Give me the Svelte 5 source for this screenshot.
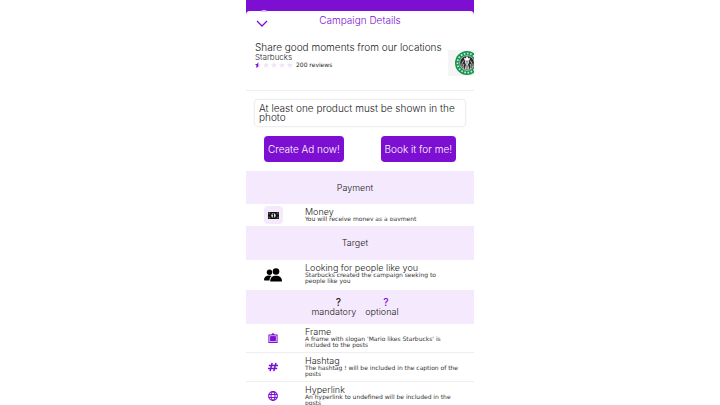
<script>
  const stars = [0, 1, 2, 3, 4];
  const starPath = 'M12 0l3.600 7.800 8.400.9-6.200 5.700 1.700 8.600L12 18.800l-7.500 4.200 1.700-8.600L0 8.700l8.400-.9z';
  const extras = [
    { icon: 'frame', name: 'Frame', text: "A frame with slogan 'Mario likes Starbucks' is included to the posts" },
    { icon: 'hash', name: 'Hashtag', text: 'The hashtag ! will be included in the caption of the posts' },
    { icon: 'globe', name: 'Hyperlink', text: 'An hyperlink to undefined will be included in the posts' }
  ];
</script>

<div class="phone">
  <main>
    <header>
      <button class="close" aria-label="Close">
        <svg viewBox="0 0 12 8"><path d="M1 1l5 5 5-5" fill="none" stroke="#7c0fd1" stroke-width="1.3" /></svg>
      </button>
      <h1>Campaign Details</h1>
    </header>

    <section class="summary">
      <div class="about">
        <h2>Share good moments from our locations</h2>
        <p class="brand">Starbucks</p>
        <div class="rating">
          {#each stars as i}
            <svg viewBox="0 0 24 24">
              <path d={starPath} fill="#f1e3fc" />
              {#if i === 0}<path d="M13 0v18.800l-8.500 4.200 1.700-8.600L0 8.700l8.400-.9z" fill="#7c0fd1" />{/if}
            </svg>
          {/each}
          <span>200 reviews</span>
        </div>
      </div>
      <div class="logo">
        <svg viewBox="0 0 24 24" role="img" aria-label="Starbucks">
          <circle cx="12" cy="12" r="12" fill="#14934d" />
          <circle cx="12" cy="12" r="9.600" fill="none" stroke="#c5e6d3" stroke-width="1.800" stroke-dasharray="1.700 1.500" />
          <circle cx="12" cy="12" r="7.300" fill="#2b2b2b" stroke="#fff" stroke-width=".6" />
          <path d="M9 6.500l1.500 1L12 5l1.500 2.500 1.500-1-.5 2.500h-5z" fill="#fff" />
          <path d="M9 9.500c-2 2-2.500 4-2 7M15 9.500c2 2 2.500 4 2 7M8.800 13c-.6 2-.6 3-.3 5M15.200 13c.6 2 .6 3 .3 5" fill="none" stroke="#ddd" stroke-width=".8" />
          <path d="M10 9h4v3l-1 1.500 1.500 5h-5l1.500-5-1-1.500z" fill="#ccc" />
          <path d="M11 10.500h.7M12.500 10.500h.7M11.500 12h1M12 14v4" stroke="#222" stroke-width=".6" />
        </svg>
      </div>
    </section>

    <p class="rule">At least one product must be shown in the photo</p>

    <div class="actions">
      <button class="primary">Create Ad now!</button>
      <button class="primary">Book it for me!</button>
    </div>

    <h3 class="band">Payment</h3>
    <div class="row short">
      <div class="icon">
        <span class="tile">
          <svg class="cash" viewBox="0 0 11 7">
            <rect width="11" height="7" rx=".5" fill="#111" />
            <path d="M1 2.500V1h1.500M8.500 1H10v1.500M1 4.500V6h1.500M8.500 6H10V4.500" fill="none" stroke="#999" stroke-width=".6" />
            <ellipse cx="5.500" cy="3.500" rx="2.200" ry="2.500" fill="#ddd" />
            <path d="M5.500 1.500v4M4.500 2.500l1-.7M4.500 5.300h2" stroke="#111" stroke-width="1" />
          </svg>
        </span>
      </div>
      <div class="copy">
        <h4>Money</h4>
        <p>You will receive money as a payment</p>
      </div>
    </div>

    <h3 class="band tall">Target</h3>
    <div class="row people">
      <div class="icon">
        <svg class="group" viewBox="0 0 18 14">
          <circle cx="5.500" cy="4.200" r="2.700" />
          <circle cx="12" cy="3.500" r="3.300" />
          <path d="M0 12c0-3 2-4.500 5-4.500 1 0 2 .2 2.700.6C6.200 9.200 5.600 10.500 5.500 12.500H.5z" />
          <path d="M6.200 13.500c0-4 2.300-5.700 5.800-5.700s6 1.700 6 5.700z" />
        </svg>
      </div>
      <div class="copy">
        <h4>Looking for people like you</h4>
        <p>Starbucks created the campaign seeking to people like you</p>
      </div>
    </div>

    <div class="band tall legend">
      <div><b>?</b><span>mandatory</span></div>
      <div><b class="optional">?</b><span>optional</span></div>
    </div>

    {#each extras as item}
      <div class="row extra">
        <div class="icon">
          <svg class="glyph" viewBox="0 0 24 24">
            {#if item.icon === 'frame'}
              <path fill="#7c0fd1" d="M23 3.500h-6.500L12 0 7.500 3.500H1V24h22zM20.500 21.500h-17V6h17zM5.500 8h13v11.500h-13z" fill-rule="evenodd" />
              <path fill="#7c0fd1" d="M5.500 8h13v11.500h-13z" />
            {:else if item.icon === 'hash'}
              <path fill="none" stroke="#7c0fd1" stroke-width="3.600" d="M10 2L5 22M19 2l-5 20M2 8.500h22M0 15.500h22" />
            {:else}
              <g fill="none" stroke="#7c0fd1" stroke-width="2.600">
                <circle cx="12" cy="12" r="10.500" />
                <ellipse cx="12" cy="12" rx="4.700" ry="10.500" />
                <path d="M2 8.500h20M2 15.500h20" />
              </g>
            {/if}
          </svg>
        </div>
        <div class="copy">
          <h4>{item.name}</h4>
          <p>{item.text}</p>
        </div>
      </div>
    {/each}
  </main>
</div>

<style>
  :global(body) { background: #fff; overflow: hidden; }
  .phone {
    box-sizing: border-box;
    width: min(100%, 228px);
    height: 100vh;
    margin: 0 auto;
    padding-top: 11px;
    overflow: hidden;
    background: #7c0fd1;
    color: #222;
    font-family: Inter, "Liberation Sans", sans-serif;
    font-weight: 300;
  }
  main { position: relative; min-height: 100%; background: #fff; border-radius: 4px 4px 0 0; }
  /* soft highlight of the close handle above the sheet's edge */
  main::before {
    content: "";
    position: absolute;
    top: -1px;
    left: 15px;
    width: 6px;
    height: 2px;
    border-radius: 3px 3px 0 0;
    background: #dcbcf3;
  }
  h1, h2, h3, h4, p { margin: 0; font-weight: 300; }
  svg { display: block; }
  button { border: 0; padding: 0; font: inherit; cursor: pointer; }
  header {
    display: grid;
    grid-template-columns: 32px 1fr 32px;
    align-items: center;
    height: 18px;
  }
  .close { justify-self: center; margin-top: 8px; background: none; }
  .close svg { width: 12px; height: 8px; }
  h1 { font-size: 10px; line-height: 12px; text-align: center; color: #7c0fd1; }
  .summary {
    display: flex;
    justify-content: space-between;
    box-sizing: border-box;
    height: 62px;
    padding: 13px 0 0 9px;
    border-bottom: 1px solid #eee;
    overflow: hidden;
  }
  .about { white-space: nowrap; }
  h2 { font-size: 10px; line-height: 11px; }
  .brand { font-size: 8px; line-height: 8px; }
  .rating {
    display: flex;
    align-items: center;
    gap: 2px;
    height: 7px;
    font-family: "DejaVu Sans", sans-serif;
    font-size: 6px;
    line-height: 7px;
    font-weight: 400;
  }
  .rating svg { width: 6px; height: 6px; }
  .rating span { margin-left: 1px; }
  .logo {
    flex: 0 0 26px;
    display: flex;
    box-sizing: border-box;
    height: 26px;
    margin-top: 8px;
    padding: 1px 0 0 7px;
    overflow: hidden;
    background: #f5f5f5;
  }
  .logo svg { flex: none; width: 24px; height: 24px; }
  .rule {
    margin: 8px 8px 0;
    padding: 4px;
    border: 1px solid #eee;
    border-radius: 4px;
    box-shadow: 0 0 2px #eee;
    font-size: 10px;
    line-height: 9px;
  }
  .actions { display: flex; justify-content: space-between; padding: 9px 18px; }
  .primary {
    height: 26px;
    padding: 0 4px;
    border-radius: 4px;
    background: #7c0fd1;
    color: #fff;
    font-size: 10px;
    line-height: 12px;
    white-space: nowrap;
  }
  .band {
    display: flex;
    align-items: center;
    justify-content: center;
    box-sizing: border-box;
    height: 33px;
    padding-right: 10px;
    background: #f5e9fd;
    font-size: 9px;
    line-height: 10px;
  }
  .tall { height: 34px; }
  .row { display: flex; box-sizing: border-box; }
  .icon { flex: 0 0 54px; display: flex; align-items: center; justify-content: center; }
  .copy { flex: 1; padding: 4px 12px 0 5px; }
  h4 { font-size: 9px; line-height: 8px; }
  .copy p {
    font-family: "DejaVu Sans", sans-serif;
    font-size: 6px;
    line-height: 6px;
    font-weight: 400;
    color: #333;
  }
  .short { height: 22px; }
  .short .copy { height: 17px; box-sizing: border-box; overflow: hidden; }
  .people { height: 30px; }
  .people .copy { padding-right: 20px; }
  .extra { height: 29px; border-bottom: 1px solid #eee; }
  .tile {
    display: flex;
    align-items: center;
    justify-content: center;
    width: 19px;
    height: 18px;
    border-radius: 4px;
    background: #f5e9fd;
  }
  .cash { width: 11px; height: 7px; }
  .group { width: 18px; height: 14px; }
  .glyph { width: 10px; height: 10px; }
  .legend { gap: 9px; }
  .legend div { display: flex; flex-direction: column; align-items: center; }
  .legend b { padding-left: 9px; font-size: 10px; font-weight: 500; }
  .legend .optional { padding-left: 8px; color: #7c0fd1; }
</style>
